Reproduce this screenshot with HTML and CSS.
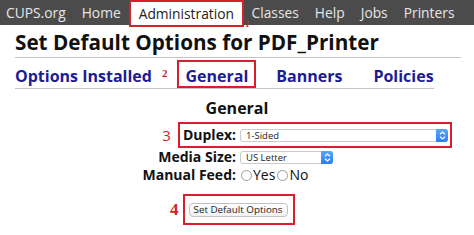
FILE: index.html
```html
<!doctype html>
<html lang="en">
<head>
    <meta charset="UTF-8">
    <title>Set Default Options for PDF_Printer</title>
    <link rel="stylesheet" href="styles.css">
</head>
<body>
    <nav class="topbar">
        <a>CUPS.org</a>
        <a>Home</a>
        <a class="current">Administration</a><span class="note note-1">1</span>
        <a>Classes</a>
        <a>Help</a>
        <a>Jobs</a>
        <a>Printers</a>
    </nav>

    <h1 class="title">Set Default Options for PDF_Printer</h1>

    <div class="tabs">
        <span class="tab">Options Installed</span>
        <span class="note note-2">2</span>
        <span class="tab marked">General</span>
        <span class="tab tab-banners">Banners</span>
        <span class="tab tab-policies">Policies</span>
    </div>

    <h2 class="section">General</h2>

    <div class="form">
        <div class="row row-marked">
            <div class="label"><span class="note note-3">3</span><span class="boxed-label">Duplex:</span></div>
            <div class="field boxed-field">
                <span class="select select-wide"><span class="value">1-Sided</span><span class="stepper"><svg width="7" height="9" viewBox="0 0 7 9"><path d="M1 3.2 L3.5 1 L6 3.2 M1 5.8 L3.5 8 L6 5.8" fill="none" stroke="#fff" stroke-width="1.2"/></svg></span></span>
            </div>
        </div>
        <div class="row">
            <div class="label">Media Size:</div>
            <div class="field">
                <span class="select select-short"><span class="value">US Letter</span><span class="stepper"><svg width="7" height="9" viewBox="0 0 7 9"><path d="M1 3.2 L3.5 1 L6 3.2 M1 5.8 L3.5 8 L6 5.8" fill="none" stroke="#fff" stroke-width="1.2"/></svg></span></span>
            </div>
        </div>
        <div class="row">
            <div class="label">Manual Feed:</div>
            <div class="field">
                <span class="radio"></span><span class="radio-text">Yes</span><span class="radio"></span><span class="radio-text">No</span>
            </div>
        </div>
    </div>

    <div class="actions">
        <span class="note note-4">4</span>
        <div class="button-box"><button class="btn">Set Default Options</button></div>
    </div>
</body>
</html>
```
FILE: styles.css
```css
* {
    margin: 0;
    padding: 0;
    box-sizing: border-box;
}

body {
    font-family: "Open Sans", "DejaVu Sans", sans-serif;
    color: #111;
    background: #fff;
    width: 474px;
    height: 235px;
    overflow: hidden;
}

.topbar {
    display: flex;
    height: 25px;
    background: #4b4b4b;
    font-size: 13.8px;
    white-space: nowrap;
}

.topbar a {
    display: flex;
    align-items: center;
    padding: 0 8px;
    color: #e6e6e6;
}

.topbar a:first-child {
    padding-left: 6px;
}

.topbar .current {
    height: 27px;
    padding: 0 8px;
    background: #fff;
    color: #222;
    border: 2px solid #d8202c;
}

.note {
    color: #d8202c;
}

.note-1 {
    align-self: flex-end;
    font-size: 9px;
    line-height: 9px;
    margin: 0 -6px -4px 1px;
    font-family: "Liberation Serif", serif;
    font-weight: bold;
}

.title {
    margin: 5px 13px 0 15px;
    padding-bottom: 3px;
    font-size: 20.7px;
    line-height: 24px;
    font-weight: bold;
    white-space: nowrap;
    border-bottom: 1px solid #c4c4c4;
}

.tabs {
    display: flex;
    align-items: baseline;
    margin: 2px 40px 0 15px;
    border-bottom: 1px solid #c4c4c4;
    font-size: 16px;
    line-height: 20px;
    font-weight: bold;
    white-space: nowrap;
}

.tab {
    flex: none;
    color: #1c1c96;
}

.note-2 {
    flex: none;
    margin: 0 10px 0 10px;
    font-family: "Liberation Serif", serif;
    font-size: 11px;
    font-weight: bold;
    position: relative;
    top: -5px;
}

.marked {
    padding: 4px 6px 0 6px;
    border: 2px solid #d8202c;
    margin-bottom: -2px;
}

.tab-banners {
    margin-left: 20px;
}

.tab-policies {
    margin-left: 31px;
}

.section {
    margin-top: 9px;
    text-align: center;
    font-size: 16px;
    line-height: 20px;
    font-weight: bold;
}

.form {
    margin-top: 4px;
}

.row {
    display: flex;
    height: 18px;
    font-size: 14px;
    line-height: 18px;
    white-space: nowrap;
}

.row-marked {
    height: 26px;
}

.label {
    display: flex;
    justify-content: flex-end;
    align-items: center;
    width: 236px;
    flex: none;
    font-weight: bold;
}

.boxed-label {
    align-self: stretch;
    padding: 2px 0 2px 3px;
    border: 2px solid #d8202c;
    border-right: 0;
}

.note-3 {
    margin-right: 7px;
    font-size: 15px;
    font-weight: normal;
}

.field {
    display: flex;
    align-items: center;
    padding-left: 4px;
}

.boxed-field {
    padding-right: 2px;
    border: 2px solid #d8202c;
    border-left: 0;
}

.select {
    display: flex;
    height: 13px;
    border: 1px solid #cacaca;
    border-radius: 3px;
    background: #fff;
    font-size: 9.5px;
    line-height: 11px;
    color: #222;
}

.select-wide {
    width: 208px;
}

.select-short {
    width: 93px;
}

.value {
    flex: 1;
    padding-left: 5px;
}

.stepper {
    display: flex;
    align-items: center;
    justify-content: center;
    width: 12px;
    margin: -1px -1px -1px 0;
    border-radius: 0 3px 3px 0;
    background: linear-gradient(#59a6f9, #2d7ef0);
}

.radio {
    width: 11px;
    height: 11px;
    border: 1px solid #9c9c9c;
    border-radius: 50%;
    background: #fff;
    margin: 0 1px 0 1px;
}

.radio-text {
    margin-right: 1px;
}

.actions {
    display: flex;
    align-items: center;
    margin-top: 10px;
    padding-left: 170px;
}

.note-4 {
    font-family: "Liberation Serif", serif;
    font-size: 17px;
    font-weight: bold;
    margin-right: 4px;
}

.button-box {
    padding: 7px 5px 6px 4px;
    border: 2px solid #d8202c;
}

.btn {
    display: block;
    width: 99px;
    height: 14px;
    border: 1px solid #c2c2c2;
    border-radius: 4px;
    background: linear-gradient(#fff, #f1f1f1);
    font-family: "Open Sans", sans-serif;
    font-size: 9.8px;
    line-height: 12px;
    color: #222;
}
```
